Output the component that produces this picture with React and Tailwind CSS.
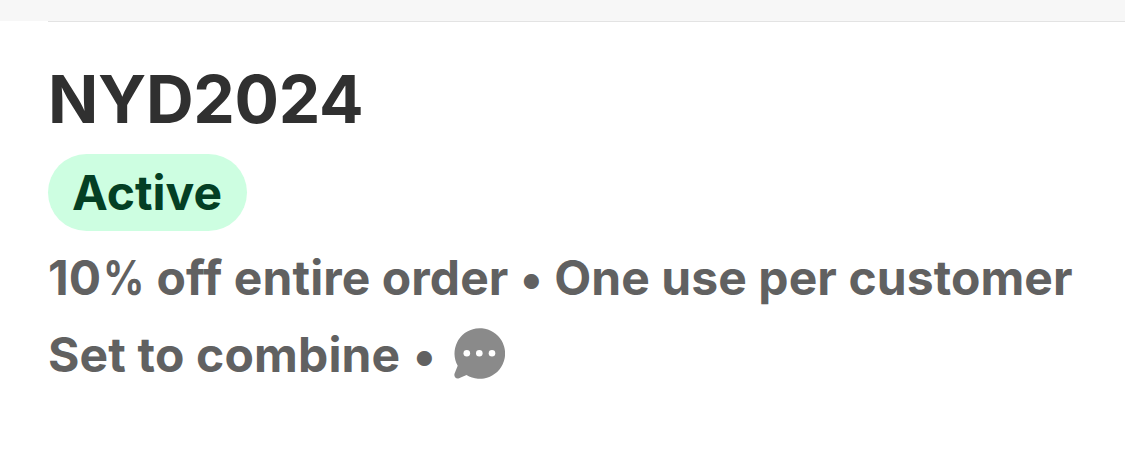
export default function App() {
  return (
    <main className="flex h-[462px] w-[1125px] flex-col bg-white font-['Inter',sans-serif]">
      <header className="h-[21px] shrink-0 bg-[#f7f7f7]" />
      <section className="ml-12 flex flex-1 flex-col items-start border-t border-[#e3e3e3]">
        <h1 className="mt-[41px] h-[72px] text-[66px] leading-[72px] font-bold tracking-[-0.3px] text-[#303030]">NYD2024</h1>
        <span className="mt-[19px] flex h-[77px] w-[199px] items-center rounded-full bg-[#cdfee1] px-6 text-[48px] leading-[77px] font-bold text-[#043f24]">Active</span>
        <p className="mt-[8px] h-[77px] whitespace-nowrap text-[48px] leading-[77px] font-bold tracking-[0.08px] text-[#616161]">
          10<span className="ml-[2px] -mr-[7px] inline-block origin-left scale-x-[0.85]">%</span> off entire order • One use per customer
        </p>
        <div className="flex h-[77px] items-center whitespace-nowrap text-[48px] leading-[77px] font-bold tracking-[0.16px] text-[#616161]">
          <span>Set to combine <span className="ml-px">•</span></span>
          <svg className="mb-0.5 ml-[18px] h-[51px] w-[51px]" viewBox="0 0 51 51">
            <path d="M3.7 37.8A25.3 25.3 0 1 1 12.5 47L5 50.2C2 51.3-.5 48.5.6 45.6Z" fill="#8a8a8a" />
            <g fill="white"><circle cx="12.8" cy="25.3" r="3.3" /><circle cx="25.3" cy="25.3" r="3.3" /><circle cx="38" cy="25.3" r="3.3" /></g>
          </svg>
        </div>
      </section>
    </main>
  );
}
